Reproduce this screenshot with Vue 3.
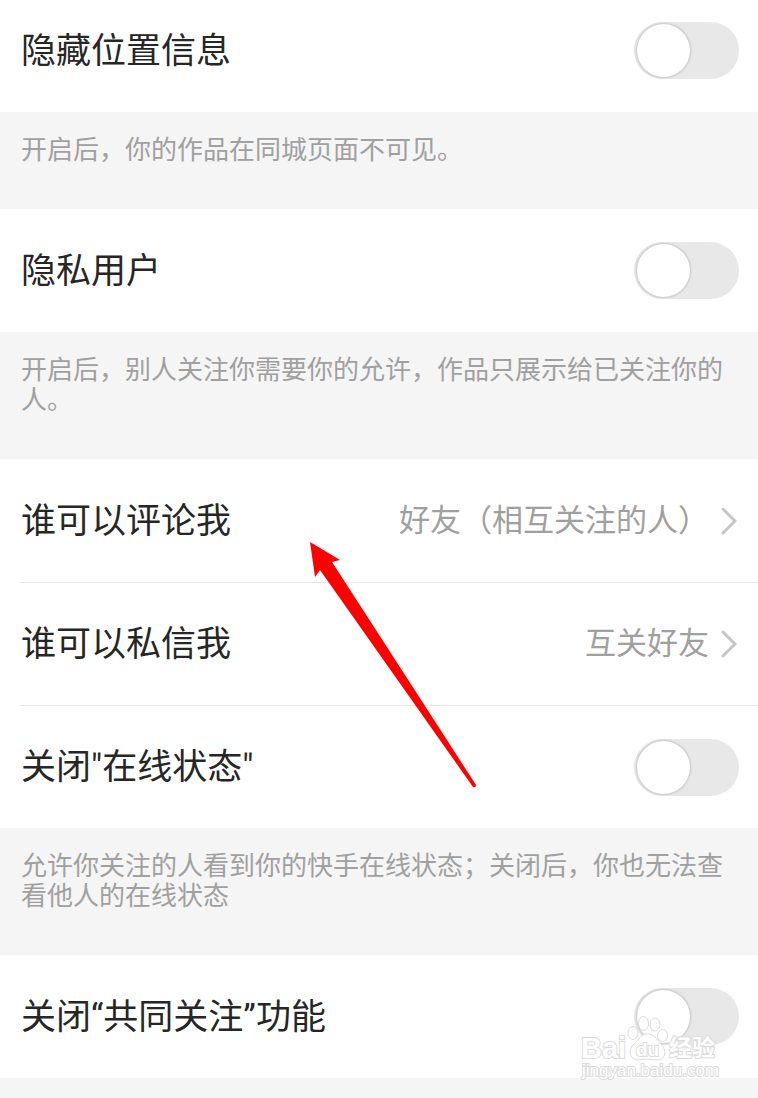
<script setup>
import { ref } from 'vue'

const settings = ref([
  { id: 'location', title: '隐藏位置信息', type: 'switch', on: false, note: '开启后，你的作品在同城页面不可见。' },
  { id: 'private', title: '隐私用户', type: 'switch', on: false, note: '开启后，别人关注你需要你的允许，作品只展示给已关注你的人。' },
  { id: 'comment', title: '谁可以评论我', type: 'link', value: '好友（相互关注的人）' },
  { id: 'message', title: '谁可以私信我', type: 'link', value: '互关好友', line: true },
  { id: 'online', title: '关闭"在线状态"', type: 'switch', on: false, line: true, note: '允许你关注的人看到你的快手在线状态；关闭后，你也无法查看他人的在线状态' },
  { id: 'common', title: '关闭“共同关注”功能', type: 'switch', on: false }
])
</script>

<template>
  <main class="page">
    <section v-for="item in settings" :key="item.id" class="group">
      <div v-if="item.line" class="line"></div>
      <label v-if="item.type === 'switch'" class="row" :class="{ lined: item.line }" :for="item.id">
        <span class="title">{{ item.title }}</span>
        <input :id="item.id" v-model="item.on" class="switch" type="checkbox" />
      </label>
      <button v-else class="row" :class="{ lined: item.line }" type="button">
        <span class="title">{{ item.title }}</span>
        <span class="value">{{ item.value }}</span>
        <svg class="chevron" viewBox="0 0 18 28" aria-hidden="true">
          <path d="M2 2 L14 14 L2 26" />
        </svg>
      </button>
      <p v-if="item.note" class="note">{{ item.note }}</p>
    </section>
    <div class="footer"></div>

    <svg class="arrow" viewBox="0 0 168 248" aria-hidden="true">
      <path d="M0 0 L30 18 L22 20 L166 243 Q166 246 163 245 L10 28 L5 35 Z" />
    </svg>

    <svg class="watermark" viewBox="0 0 144 72" aria-hidden="true">
      <ellipse cx="53" cy="23" rx="5" ry="6.5" />
      <ellipse cx="63.5" cy="13.5" rx="5" ry="7" />
      <ellipse cx="75" cy="14.5" rx="5" ry="6.5" />
      <ellipse cx="82.5" cy="25.5" rx="5" ry="6" />
      <path d="M67 24 C60 24 58 31 54 34 C48 39 49 49 57 50 C61 50 63 49 67 49 C71 49 74 50 78 50 C86 49 87 40 81 34 C77 30 75 24 67 24 Z" />
      <text class="brand" x="1" y="48">Bai</text>
      <text class="du" x="56" y="46">du</text>
      <text class="cjk" x="89" y="46">经验</text>
      <text class="site" x="2" y="66">jingyan.baidu.com</text>
    </svg>
  </main>
</template>

<style>
body {
  margin: 0;
  background: #fff;
}
</style>

<style scoped>
.page {
  position: relative;
  overflow: hidden;
  font-family: Roboto, "Noto Sans CJK SC", sans-serif;
  background: #fff;
}

.row {
  display: flex;
  align-items: center;
  box-sizing: border-box;
  width: 100%;
  height: 123px;
  padding: 0 19px 0 21px;
  border: 0;
  background: #fff;
  font-family: inherit;
  text-align: left;
  cursor: pointer;
}

.row.lined {
  height: 122px;
}

/* the list is scrolled, so the first row is partly cut off */
.group:first-child .row {
  height: 112px;
  padding-bottom: 11px;
}

.line {
  height: 1px;
  margin-left: 21px;
  background: #e6e6e6;
}

.title {
  flex: 1;
  padding-top: 2px;
  font-size: 35px;
  line-height: 48px;
  color: #262626;
}

.value {
  font-size: 31px;
  line-height: 48px;
  color: #a0a0a0;
}

.chevron {
  width: 18px;
  height: 28px;
  margin-left: 12px;
  fill: none;
  stroke: #c6c6c6;
  stroke-width: 3;
  stroke-linecap: round;
  stroke-linejoin: round;
}

.switch {
  appearance: none;
  display: flex;
  align-items: center;
  box-sizing: border-box;
  width: 105px;
  height: 57px;
  margin: 0;
  padding: 0 3px;
  border-radius: 29px;
  background: #e8e8e8;
  cursor: pointer;
}

.switch::before {
  content: '';
  width: 53px;
  height: 53px;
  border-radius: 50%;
  background: #fff;
  box-shadow: 0 0 3px rgba(0, 0, 0, 0.3);
}

.switch:checked {
  justify-content: flex-end;
  background: #ff5000;
}

.note {
  margin: 0;
  padding: 23px 21px 44px;
  background: #f5f5f5;
  font-size: 26px;
  line-height: 30px;
  color: #a0a0a0;
}

.footer {
  height: 20px;
  background: #f5f5f5;
}

.arrow {
  position: absolute;
  top: 542px;
  left: 310px;
  width: 168px;
  height: 248px;
  fill: #f00;
  pointer-events: none;
}

.watermark {
  position: absolute;
  right: 34px;
  bottom: 16px;
  width: 144px;
  height: 72px;
  fill: #fff;
  stroke: #dcdcdc;
  stroke-width: 1;
  pointer-events: none;
}

.watermark text {
  font-family: "Liberation Sans", "Noto Sans CJK SC", sans-serif;
  font-weight: 700;
  paint-order: stroke;
  stroke-width: 2;
}

.brand {
  font-size: 29px;
}

.du {
  font-size: 19px;
}

.cjk {
  font-size: 23px;
}

.watermark .site {
  font-size: 17px;
  font-weight: 400;
}
</style>
